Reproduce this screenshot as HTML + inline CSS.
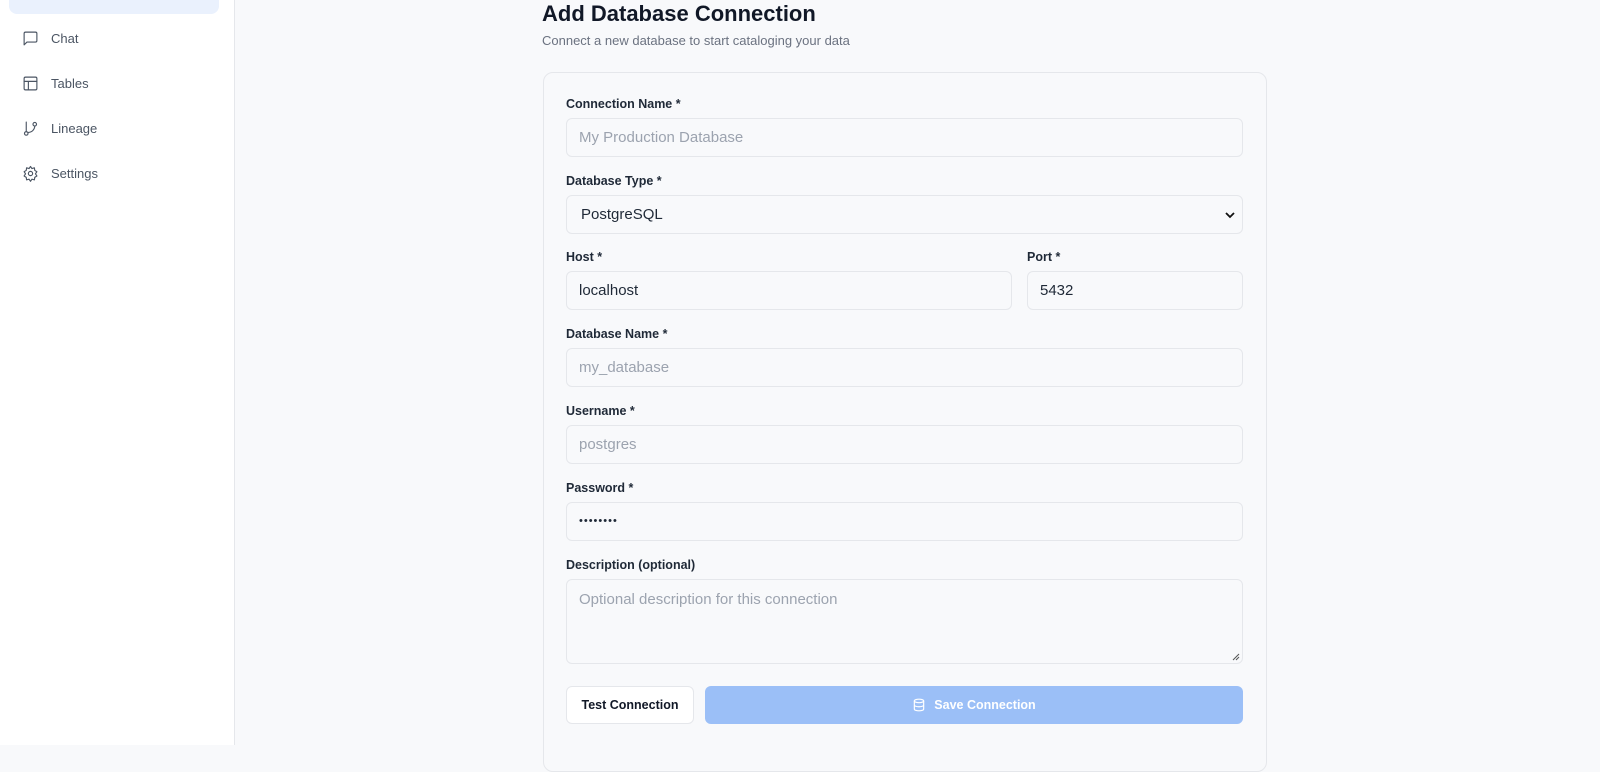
<!DOCTYPE html>
<html><head><style>
*{box-sizing:border-box;margin:0;padding:0}
body{width:1600px;height:745px;overflow:hidden;background:#f8f9fb;font-family:"Liberation Sans",sans-serif;position:relative}
.sb{position:absolute;left:0;top:0;width:235px;height:745px;background:#fff;border-right:1px solid #e5e7eb}
.act{position:absolute;left:9px;top:-20px;width:210px;height:34px;background:#eaf1fd;border-radius:8px}
.nav{position:absolute;left:22px;display:flex;align-items:center;font-size:13px;color:#4b5563}
.nav svg{width:17px;height:17px;margin-right:12px;stroke:#4b5563;fill:none;stroke-width:1.6;stroke-linecap:round;stroke-linejoin:round}
h1{position:absolute;left:542px;top:0;font-size:22px;font-weight:bold;color:#111827;line-height:28px}
.sub{position:absolute;left:542px;top:33px;font-size:13px;color:#6b7280}
.card{position:absolute;left:543px;top:72px;width:724px;height:700px;border:1px solid #e5e7eb;border-radius:10px;background:#f8f9fb}
.lb{position:absolute;left:566px;font-size:12.5px;font-weight:bold;color:#1f2937}
.in{position:absolute;height:39px;border:1px solid #e5e7eb;border-radius:6px;background:#f8f9fb;font-size:15px;color:#9ca3af;padding-left:12px;line-height:37px}
.dk{color:#1f2937}
</style></head><body>
<div class="sb">
<div class="act"></div>
<div class="nav" style="top:30px"><svg viewBox="0 0 24 24"><path d="M21 15a2 2 0 0 1-2 2H7l-4 4V5a2 2 0 0 1 2-2h14a2 2 0 0 1 2 2z"/></svg>Chat</div>
<div class="nav" style="top:75px"><svg viewBox="0 0 24 24"><rect x="3" y="3" width="18" height="18" rx="2"/><path d="M3 9h18M9 9v12"/></svg>Tables</div>
<div class="nav" style="top:120px"><svg viewBox="0 0 24 24"><circle cx="6" cy="19" r="2.5"/><circle cx="18" cy="6" r="2.5"/><path d="M6 3v13.5M18 8.5a9 9 0 0 1-9 9"/></svg>Lineage</div>
<div class="nav" style="top:165px"><svg viewBox="0 0 24 24"><circle cx="12" cy="12" r="3"/><path d="M12 2l2 3 3.5-1 .5 3.5 3 2-2 3 2 3-3 2-.5 3.5-3.5-1-2 3-2-3-3.5 1-.5-3.5-3-2 2-3-2-3 3-2L6.5 4 10 5z"/></svg>Settings</div>
</div>
<h1>Add Database Connection</h1>
<div class="sub">Connect a new database to start cataloging your data</div>
<div class="card"></div>
<div class="lb" style="top:97px">Connection Name *</div>
<div class="in" style="left:566px;top:118px;width:677px">My Production Database</div>
<div class="lb" style="top:174px">Database Type *</div>
<div class="in dk" style="left:566px;top:195px;width:677px;padding-left:14px">PostgreSQL<svg style="position:absolute;right:6px;top:14px" width="12" height="10" viewBox="0 0 12 10"><path d="M2 3l4 4 4-4" stroke="#111" stroke-width="1.8" fill="none"/></svg></div>
<div class="lb" style="top:250px">Host *</div>
<div class="lb" style="top:250px;left:1027px">Port *</div>
<div class="in dk" style="left:566px;top:271px;width:446px">localhost</div>
<div class="in dk" style="left:1027px;top:271px;width:216px">5432</div>
<div class="lb" style="top:327px">Database Name *</div>
<div class="in" style="left:566px;top:348px;width:677px">my_database</div>
<div class="lb" style="top:404px">Username *</div>
<div class="in" style="left:566px;top:425px;width:677px">postgres</div>
<div class="lb" style="top:481px">Password *</div>
<div class="in dk" style="left:566px;top:502px;width:677px;font-size:11px;letter-spacing:1px">••••••••</div>
<div class="lb" style="top:558px">Description (optional)</div>
<div class="in" style="left:566px;top:579px;width:677px;height:85px;line-height:20px;padding-top:10px">Optional description for this connection<svg style="position:absolute;right:2px;bottom:2px" width="9" height="9" viewBox="0 0 9 9"><path d="M8 2L2 8M8 5L5 8" stroke="#555" stroke-width="1"/></svg></div>
<div style="position:absolute;left:566px;top:686px;width:128px;height:38px;background:#fff;border:1px solid #e5e7eb;border-radius:6px;font-size:12.5px;font-weight:bold;color:#111827;text-align:center;line-height:36px">Test Connection</div>
<div style="position:absolute;left:705px;top:686px;width:538px;height:38px;background:#9bbff7;border-radius:6px;font-size:12.5px;font-weight:bold;color:#fff;display:flex;align-items:center;justify-content:center"><svg width="14" height="14" viewBox="0 0 24 24" fill="none" stroke="#fff" stroke-width="2" style="margin-right:8px"><ellipse cx="12" cy="5" rx="8" ry="3"/><path d="M4 5v14c0 1.7 3.6 3 8 3s8-1.3 8-3V5M4 12c0 1.7 3.6 3 8 3s8-1.3 8-3"/></svg>Save Connection</div>
</body></html>
